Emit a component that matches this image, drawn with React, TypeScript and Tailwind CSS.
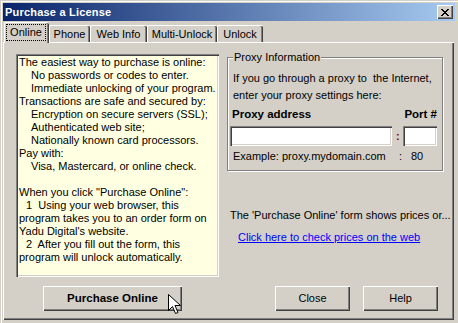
import React from "react";

const sunken =
  "shadow-[inset_1px_1px_0_#808080,inset_2px_2px_0_#404040,inset_-1px_-1px_0_#ffffff,inset_-2px_-2px_0_#D4D0C8]";
const raised =
  "shadow-[inset_1px_1px_0_#ffffff,inset_-1px_-1px_0_#404040,inset_-2px_-2px_0_#808080]";

function Tab({ label, w, selected }: { label: string; w: number; selected?: boolean }) {
  if (selected) {
    return (
      <div
        className="relative z-10 mb-[-1px] h-[21px] bg-[#D4D0C8] border-l border-t border-white rounded-tl-[2px] rounded-tr-[2px] shadow-[inset_-1px_0_0_#404040,inset_-2px_0_0_#808080] flex items-start justify-center pt-[1px] pr-[2px]"
        style={{ width: w }}
      >
        <div className="h-[17px] mt-[0px] w-[40px] border border-dotted border-black flex items-center justify-center text-[11px] leading-[13px] text-black">
          {label}
        </div>
      </div>
    );
  }
  return (
    <div
      className="h-[17px] bg-[#D4D0C8] border-l border-t border-white rounded-tl-[2px] rounded-tr-[2px] shadow-[inset_-1px_0_0_#404040,inset_-2px_0_0_#808080] flex items-center justify-center pr-[1px] text-[11px] leading-[13px] text-black"
      style={{ width: w }}
    >
      {label}
    </div>
  );
}

function Cursor() {
  return (
    <svg
      className="absolute left-[125px] top-[8px]"
      width="13"
      height="21"
      viewBox="0 0 13 21"
      shapeRendering="crispEdges"
    >
      <path
        d="M0.5 0.5 L0.5 16.5 L4.5 12.5 L7.5 19.5 L10 18.5 L7 11.5 L12.5 11.5 Z"
        fill="#ffffff"
        stroke="#000000"
        strokeWidth="1"
        shapeRendering="auto"
      />
    </svg>
  );
}

export default function App() {
  return (
    <div className="w-[458px] h-[323px] bg-[#D4D0C8] overflow-hidden shadow-[inset_1px_1px_0_#D4D0C8,inset_2px_2px_0_#ffffff] font-['Liberation_Sans',Arial,sans-serif] text-black">
      <div className="pt-[3px] pl-[3px]">
        {/* Title bar */}
        <div className="w-[452px] h-[18px] bg-[linear-gradient(to_right,#0A246A,#A6CAF0)] flex items-center justify-between pl-[2px] pr-[2px]">
          <span className="text-white font-bold text-[11px] leading-[13px] tracking-[0.2px]">
            Purchase a License
          </span>
          <div className={`w-[16px] h-[14px] bg-[#D4D0C8] ${raised} flex items-center justify-center`}>
            <svg width="8" height="7" viewBox="0 0 8 7" shapeRendering="crispEdges">
              <path
                d="M0 0h2v1h-2zM6 0h2v1h-2zM1 1h2v1h-2zM5 1h2v1h-2zM2 2h4v1h-4zM3 3h2v1h-2zM2 4h4v1h-4zM1 5h2v1h-2zM5 5h2v1h-2zM0 6h2v1h-2zM6 6h2v1h-2z"
                fill="#000"
              />
            </svg>
          </div>
        </div>
      </div>

      {/* Tabs */}
      <div className="h-[21px] flex items-end pl-[4px]">
        <Tab label="Online" w={45} selected />
        <Tab label="Phone" w={41} />
        <Tab label="Web Info" w={57} />
        <Tab label="Multi-Unlock" w={70} />
        <Tab label="Unlock" w={46} />
      </div>

      {/* Panel */}
      <div className="ml-[3px] w-[451px] h-[278px] border-l border-t border-white shadow-[inset_-1px_-1px_0_#404040,inset_-2px_-2px_0_#808080] pl-[12px] pt-[11px]">
        <div className="flex">
          {/* Yellow info box */}
          <div className={`w-[203px] h-[223px] bg-[#FFFFE1] ${sunken} pl-[3px] pt-[2px] text-[11px] leading-[13px] whitespace-nowrap`}>
            <div>The easiest way to purchase is online:</div>
            <div className="pl-[12px]">No passwords or codes to enter.</div>
            <div className="pl-[12px]">Immediate unlocking of your program.</div>
            <div>Transactions are safe and secured by:</div>
            <div className="pl-[12px]">Encryption on secure servers (SSL);</div>
            <div className="pl-[12px]">Authenticated web site;</div>
            <div className="pl-[12px]">Nationally known card processors.</div>
            <div>Pay with:</div>
            <div className="pl-[12px]">Visa, Mastercard, or online check.</div>
            <div className="h-[13px]" />
            <div>When you click "Purchase Online":</div>
            <div className="pl-[7px] whitespace-pre">1  Using your web browser, this</div>
            <div>program takes you to an order form on</div>
            <div>Yadu Digital's website.</div>
            <div className="pl-[7px] whitespace-pre">2  After you fill out the form, this</div>
            <div>program will unlock automatically.</div>
          </div>

          {/* Right column */}
          <div className="ml-[8px] w-[216px] text-[11px] leading-[13px]">
            <div className="relative mt-[3px] w-[216px] h-[114px] border border-[#808080] shadow-[1px_1px_0_#ffffff,inset_1px_1px_0_#ffffff] pl-[5px] pr-[5px]">
              <div className="absolute left-[5px] top-[-7px] bg-[#D4D0C8] px-[1px]">Proxy Information</div>
              <div className="mt-[14px]">If you go through a proxy to&nbsp; the Internet,</div>
              <div className="mt-[4px]">enter your proxy settings here:</div>
              <div className="mt-[6px] flex justify-between font-bold text-[11.5px]">
                <span className="-ml-[1px]">Proxy address</span>
                <span>Port #</span>
              </div>
              <div className="mt-[5px] flex items-center -ml-[3px]">
                <div className={`w-[164px] h-[20px] bg-white ${sunken}`} />
                <span className="w-[11px] text-center text-[#800000] font-bold">:</span>
                <div className={`w-[34px] h-[20px] bg-white ${sunken}`} />
              </div>
              <div className="mt-[4px] flex whitespace-nowrap">
                <span className="w-[49px]">Example:</span>
                <span className="w-[117px]">proxy.mydomain.com</span>
                <span className="w-[12px]">:</span>
                <span>80</span>
              </div>
            </div>
            <div className="mt-[38px] pl-[3px] whitespace-nowrap">
              The 'Purchase Online' form shows prices or...
            </div>
            <div className="mt-[9px] pl-[11px] text-[#0000FF] underline whitespace-nowrap">
              Click here to check prices on the web
            </div>
          </div>
        </div>

        {/* Buttons */}
        <div className="mt-[9px] flex">
          <div className={`relative ml-[27px] w-[139px] h-[25px] bg-[#D4D0C8] ${raised} flex items-center justify-center font-bold text-[11.5px] leading-[13px]`}>
            Purchase Online
            <Cursor />
          </div>
          <div className={`ml-[93px] w-[75px] h-[25px] bg-[#D4D0C8] ${raised} flex items-center justify-center text-[11px] leading-[13px]`}>
            Close
          </div>
          <div className={`ml-[13px] w-[75px] h-[25px] bg-[#D4D0C8] ${raised} flex items-center justify-center text-[11px] leading-[13px]`}>
            Help
          </div>
        </div>
      </div>
    </div>
  );
}
